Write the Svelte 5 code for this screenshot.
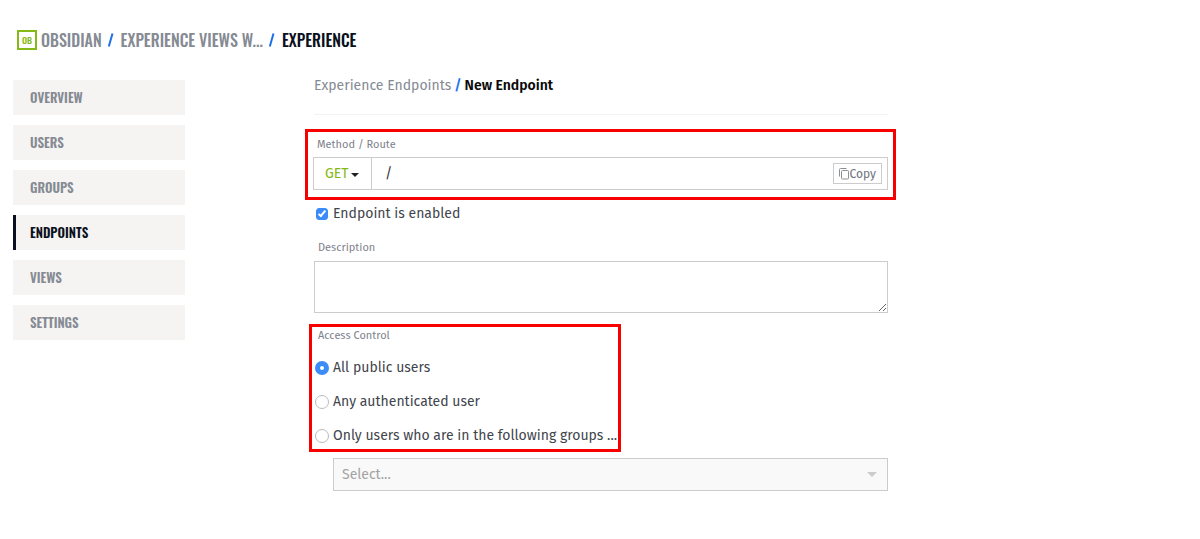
<script>
  const navItems = ['Overview', 'Users', 'Groups', 'Endpoints', 'Views', 'Settings'];
  const accessOptions = [
    { value: 'public', label: 'All public users' },
    { value: 'authenticated', label: 'Any authenticated user' },
    { value: 'groups', label: 'Only users who are in the following groups ...' }
  ];
  let method = $state('GET');
  let route = $state('/');
  let enabled = $state(true);
  let description = $state('');
  let access = $state('public');

  function copyRoute() {
    navigator.clipboard?.writeText(route);
  }
</script>

<div class="page">
  <nav class="trail" aria-label="Breadcrumb">
    <span class="logo">OB</span>
    <a href="#obsidian">Obsidian</a>
    <svg class="slash" width="7" height="14" viewBox="0 0 7 14" aria-hidden="true"><path d="M4.5 .5 .8 13.5" /></svg>
    <a href="#experience-views">Experience Views W...</a>
    <svg class="slash" width="7" height="14" viewBox="0 0 7 14" aria-hidden="true"><path d="M4.5 .5 .8 13.5" /></svg>
    <a href="#experience" class="current">Experience</a>
  </nav>

  <div class="columns">
    <nav class="side" aria-label="Sections">
      {#each navItems as item}
        <a href={'#' + item.toLowerCase()} class:active={item === 'Endpoints'}>{item}</a>
      {/each}
    </nav>

    <main>
      <h1><a href="#endpoints">Experience Endpoints</a><span class="sep">/</span><strong>New Endpoint</strong></h1>

      <form>
        <div class="marked route-block">
          <label class="caption" for="route">Method / Route</label>
          <div class="route">
            <div class="method">
              <select bind:value={method} aria-label="Method">
                <option>GET</option>
                <option>POST</option>
                <option>PUT</option>
                <option>PATCH</option>
                <option>DELETE</option>
              </select>
              <svg width="8" height="4" viewBox="0 0 8 4" aria-hidden="true"><path d="M0 0h8L4 4z" fill="#222" /></svg>
            </div>
            <input id="route" type="text" bind:value={route} />
            <button type="button" onclick={copyRoute}>
              <svg width="11" height="12" viewBox="0 0 11 12" fill="none" stroke="#8b9097" aria-hidden="true">
                <path d="M.5 8.5v-7q0-1 1-1h6" /><rect x="2.5" y="2.5" width="7" height="8.5" rx="1" />
              </svg>Copy
            </button>
          </div>
        </div>

        <label class="choice enabled"><input type="checkbox" bind:checked={enabled} />Endpoint is enabled</label>

        <label class="caption description" for="description">Description</label>
        <textarea id="description" bind:value={description}></textarea>

        <fieldset class="marked access">
          <legend class="caption">Access Control</legend>
          {#each accessOptions as option}
            <label class="choice"><input type="radio" name="access" value={option.value} bind:group={access} />{option.label}</label>
          {/each}
        </fieldset>

        <div class="groups">
          <select disabled={access !== 'groups'} aria-label="Groups">
            <option>Select...</option>
          </select>
          <svg width="10" height="5" viewBox="0 0 10 5" aria-hidden="true"><path d="M0 0h10L5 5z" fill="#ccc" /></svg>
        </div>
      </form>
    </main>
  </div>
</div>

<style>
  :global(body) { margin: 0; background: #fff; }
  .page, .page :is(input, select, textarea, button) {
    font-family: "Fira Sans", "Noto Sans", "Open Sans", sans-serif;
    font-size: 14px;
  }
  .page { padding: 28px 0 40px 13px; color: #3f454d; }
  .page *, .page *::before, .page *::after { box-sizing: border-box; }
  a { color: inherit; text-decoration: none; }

  .trail, .side {
    font-family: "Oswald", "Liberation Sans Narrow", "Roboto", sans-serif;
    font-weight: 500;
    text-transform: uppercase;
    color: #858a93;
  }
  .trail { display: flex; align-items: center; gap: 6px; height: 24px; padding-left: 4px; font-size: 16px; }
  .logo {
    display: grid;
    place-items: center;
    width: 20px;
    height: 20px;
    margin-right: -2px;
    border: 2px solid #86b817;
    color: #86b817;
    font-size: 9px;
  }
  .slash { fill: none; stroke: #1f6fe5; stroke-width: 2; }
  .current { color: #0a1020; }

  .columns { display: grid; grid-template-columns: 172px minmax(0, 1fr); column-gap: 129px; margin-top: 28px; }
  .side { display: flex; flex-direction: column; gap: 10px; font-size: 13px; font-weight: 600; }
  .side a { height: 35px; padding-left: 17px; background: #f5f4f2; line-height: 34px; }
  .side .active { border-left: 3px solid #0a1020; padding-left: 14px; color: #0a1020; }

  main { margin-right: 26vw; }
  h1 {
    margin: 0 0 14px;
    padding-bottom: 23px;
    border-bottom: 1px solid #f3f3f3;
    font-size: 14px;
    font-weight: 400;
    line-height: 11px;
    color: #858a93;
  }
  .sep { margin: 0 3px; color: #1f75ee; font-weight: 600; }
  h1 strong { color: #0a0a0a; font-weight: 600; }

  .marked { border: 3px solid #f60000; }
  .caption { display: block; padding: 0 0 0 4px; font-size: 11px; line-height: 18px; color: #7d828a; }
  .route-block { margin: 0 -8px 0 -9px; padding: 4px 5px 7px 5px; }
  .route { display: flex; align-items: center; height: 33px; margin-top: 3px; padding-right: 5px; border: 1px solid #ccc; }
  .method { position: relative; width: 58px; align-self: stretch; border-right: 1px solid #ccc; }
  .method svg { position: absolute; right: 12px; top: 15px; pointer-events: none; }
  select { appearance: none; width: 100%; height: 100%; border: 0; background: none; }
  .method select { padding: 0 0 0 11px; color: #86b817; }
  .route input { flex: 1; min-width: 0; padding: 0 13px; border: 0; outline: 0; background: none; color: #333; font-size: 14px; }
  button {
    display: flex;
    align-items: center;
    height: 21px;
    padding: 0 5px;
    border: 1px solid #ccc;
    background: #fff;
    color: #6d737c;
  }
  .route button { font-size: 12px; }

  .choice { display: flex; align-items: center; gap: 4px; line-height: 20px; }
  .choice input { appearance: none; display: grid; place-items: center; flex: none; margin: 0; }
  .choice input[type="checkbox"] { width: 12px; height: 12px; margin: 0 1px; border: 1px solid #bbb; border-radius: 3px; }
  .choice input[type="checkbox"]:checked { border-color: #3b8cf8; background: #3b8cf8; }
  .choice input[type="checkbox"]:checked::after {
    content: "";
    width: 4px;
    height: 8px;
    border: solid #fff;
    border-width: 0 2px 2px 0;
    transform: translateY(-1px) rotate(40deg);
  }
  .choice input[type="radio"] { width: 14px; height: 14px; border: 1px solid #bbb; border-radius: 50%; }
  .choice input[type="radio"]:checked { border: 5px solid #3b8cf8; }
  .enabled { margin-top: 4px; padding-left: 1px; }

  .description { margin: 15px 0 4px; }
  textarea { display: block; width: 100%; height: 52px; padding: 8px; border: 1px solid #ccc; outline: 0; background: #fff; }

  .access { width: fit-content; margin: 11px 0 0 -5px; padding: 0 1px 0 3px; }
  .access .caption { float: left; width: 100%; margin-bottom: 6px; padding-left: 3px; }
  .access .choice { clear: both; padding: 7px 0; }
  .access .choice:last-child { padding-bottom: 3px; }
  .groups { position: relative; height: 33px; margin: 6px 0 0 19px; border: 1px solid #ccc; background: #f9f9f9; }
  .groups select { padding: 0 8px; color: #a3a3a3; opacity: 1; }
  .groups svg { position: absolute; right: 10px; top: 13px; pointer-events: none; }
</style>
